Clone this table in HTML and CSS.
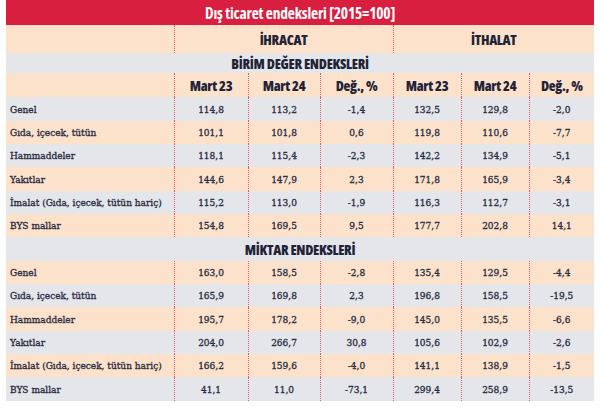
FILE: index.html
```html
<!DOCTYPE html>
<html lang="tr">
<head>
<meta charset="utf-8">
<link rel="stylesheet" href="styles.css">
</head>
<body>
<table class="trade">
  <colgroup>
    <col class="c-label"><col class="c-a"><col class="c-b"><col class="c-c"><col class="c-d"><col class="c-e"><col class="c-f">
  </colgroup>
  <thead>
    <tr class="title"><th colspan="7">Dış ticaret endeksleri [2015=100]</th></tr>
    <tr class="group peach"><th></th><th colspan="3" class="v">İHRACAT</th><th colspan="3" class="v">İTHALAT</th></tr>
    <tr class="section gray"><th colspan="7">BİRİM DEĞER ENDEKSLERİ</th></tr>
    <tr class="cols peach"><th></th><th class="v">Mart 23</th><th class="v">Mart 24</th><th class="v">Değ., %</th><th class="v">Mart 23</th><th class="v">Mart 24</th><th class="v">Değ., %</th></tr>
  </thead>
  <tbody>
    <tr class="gray"><td>Genel</td><td class="v">114,8</td><td class="v">113,2</td><td class="v">-1,4</td><td class="v">132,5</td><td class="v">129,8</td><td class="v">-2,0</td></tr>
    <tr class="peach"><td>Gıda, içecek, tütün</td><td class="v">101,1</td><td class="v">101,8</td><td class="v">0,6</td><td class="v">119,8</td><td class="v">110,6</td><td class="v">-7,7</td></tr>
    <tr class="gray"><td>Hammaddeler</td><td class="v">118,1</td><td class="v">115,4</td><td class="v">-2,3</td><td class="v">142,2</td><td class="v">134,9</td><td class="v">-5,1</td></tr>
    <tr class="peach"><td>Yakıtlar</td><td class="v">144,6</td><td class="v">147,9</td><td class="v">2,3</td><td class="v">171,8</td><td class="v">165,9</td><td class="v">-3,4</td></tr>
    <tr class="gray"><td>İmalat (Gıda, içecek, tütün hariç)</td><td class="v">115,2</td><td class="v">113,0</td><td class="v">-1,9</td><td class="v">116,3</td><td class="v">112,7</td><td class="v">-3,1</td></tr>
    <tr class="peach"><td>BYS mallar</td><td class="v">154,8</td><td class="v">169,5</td><td class="v">9,5</td><td class="v">177,7</td><td class="v">202,8</td><td class="v">14,1</td></tr>
    <tr class="section gray"><th colspan="7">MİKTAR ENDEKSLERİ</th></tr>
    <tr class="peach"><td>Genel</td><td class="v">163,0</td><td class="v">158,5</td><td class="v">-2,8</td><td class="v">135,4</td><td class="v">129,5</td><td class="v">-4,4</td></tr>
    <tr class="gray"><td>Gıda, içecek, tütün</td><td class="v">165,9</td><td class="v">169,8</td><td class="v">2,3</td><td class="v">196,8</td><td class="v">158,5</td><td class="v">-19,5</td></tr>
    <tr class="peach"><td>Hammaddeler</td><td class="v">195,7</td><td class="v">178,2</td><td class="v">-9,0</td><td class="v">145,0</td><td class="v">135,5</td><td class="v">-6,6</td></tr>
    <tr class="gray"><td>Yakıtlar</td><td class="v">204,0</td><td class="v">266,7</td><td class="v">30,8</td><td class="v">105,6</td><td class="v">102,9</td><td class="v">-2,6</td></tr>
    <tr class="peach"><td>İmalat (Gıda, içecek, tütün hariç)</td><td class="v">166,2</td><td class="v">159,6</td><td class="v">-4,0</td><td class="v">141,1</td><td class="v">138,9</td><td class="v">-1,5</td></tr>
    <tr class="gray"><td>BYS mallar</td><td class="v">41,1</td><td class="v">11,0</td><td class="v">-73,1</td><td class="v">299,4</td><td class="v">258,9</td><td class="v">-13,5</td></tr>
  </tbody>
</table>
</body>
</html>
```

FILE: styles.css
```css
html, body {
  margin: 0;
  padding: 0;
  background: #ffffff;
}
body {
  padding-left: 6px;
}
.trade {
  table-layout: fixed;
  width: 588px;
  border-collapse: collapse;
  border-spacing: 0;
  color: #262a40;
}
.c-label { width: 168px; }
.c-a { width: 74px; }
.c-b { width: 72px; }
.c-c { width: 73px; }
.c-d { width: 68px; }
.c-e { width: 68px; }
.c-f { width: 65px; }

.trade th {
  font-family: "Open Sans", "DejaVu Sans Condensed", sans-serif;
  font-weight: 800;
  font-stretch: 82%;
  font-size: 14px;
  letter-spacing: -0.3px;
  padding: 0;
  text-align: center;
  color: #1f2338;
}
.trade td {
  font-family: "DejaVu Serif Condensed", "DejaVu Serif", serif;
  font-size: 10px;
  padding: 0;
  text-align: center;
  color: #272b42;
  -webkit-text-stroke: 0.3px #272b42;
}
.trade tbody tr {
  height: 23px;
}
.trade tbody tr:nth-child(3n+1) {
  height: 24px;
}
.trade td:first-child {
  text-align: left;
  padding-left: 4px;
}
.peach { background: #fde2cb; }
.gray { background: #e5e6ea; }

.title th {
  background: #d91f3f;
  color: #ffffff;
  height: 25px;
  font-size: 15.5px;
  font-weight: 700;
  letter-spacing: -0.2px;
}
.group th { height: 28px; }
.section th { height: 20px; }
.cols th { height: 24px; }

.v {
  border-left: 1px dotted #ea566c;
}
```
